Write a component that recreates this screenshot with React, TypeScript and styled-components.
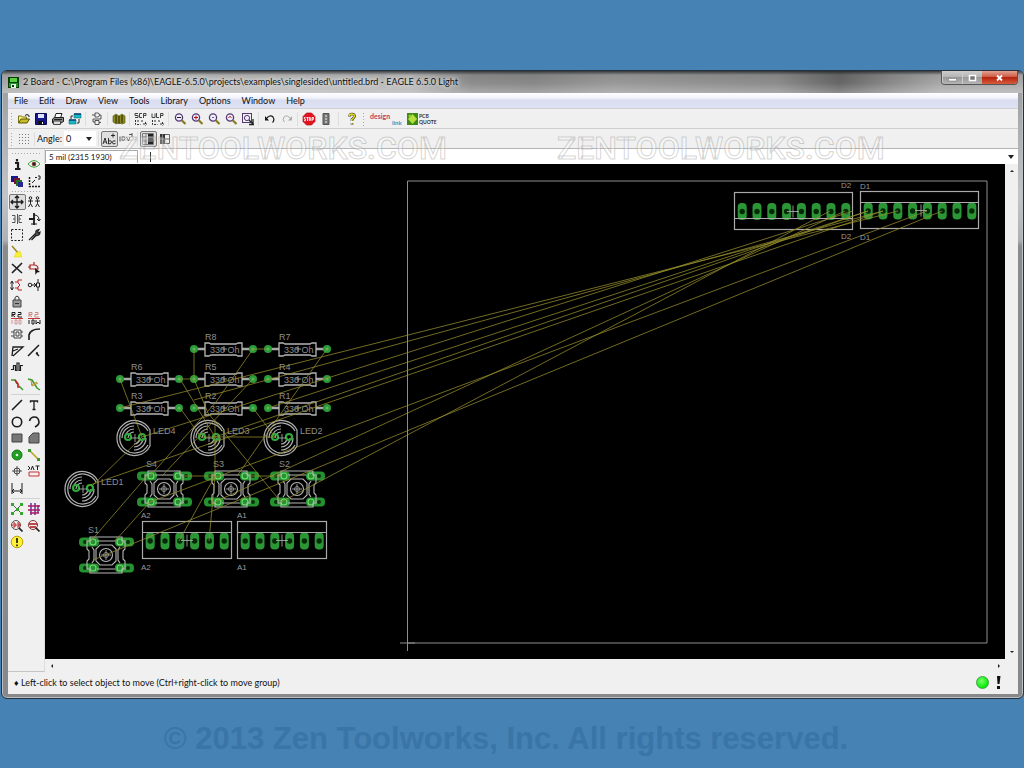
import React from 'react';
import styled, { createGlobalStyle } from 'styled-components';

const GlobalStyle = createGlobalStyle`
  * { box-sizing: border-box; }
  html, body { margin: 0; background: #4682b4; }
  body, button, select, input { font-family: Lato, "Open Sans", sans-serif; font-size: 9px; color: #111; }
  button { border: 0; padding: 0; background: none; }
`;

const Desktop = styled.div`
  display: flex;
  flex-direction: column;
  min-height: 100vh;
  padding-top: 70px;
  background: #4682b4;
`;

const Window = styled.main`
  display: flex;
  flex: 1;
  flex-direction: column;
  margin-left: 1px;
  padding: 0 5px 4px 6px;
  border: 1px solid #25313b;
  border-radius: 6px;
  background: linear-gradient(#9a9a9a, #c4c4c4 20%, #b0b0b0 27%, #8b8b8b 28%, #888 100%);
  box-shadow: inset 0 0 0 1px #b9c0c6;
`;

const TitleBar = styled.header`
  display: flex;
  align-items: center;
  height: 22px;
  margin: 0 -5px 0 -6px;
  padding: 0 5px 0 6px;
  border-radius: 5px 5px 0 0;
  background:
    linear-gradient(rgba(20, 25, 30, .75), rgba(60, 60, 60, .1) 4px, transparent 12px, rgba(255, 255, 255, .25)),
    linear-gradient(90deg, #a8a8a8, #bcbcbc 10%, #b4b4b4 40%, #8d8d8d 46%, #888 52%, #999 60%, #8c8c8c 76%, #666 82%, #8a8a8a 87%, #a9a9a9 92%, #aaa);
`;

const Title = styled.h1`
  flex: 1;
  margin: 0;
  padding-left: 4px;
  font-size: 9px;
  font-weight: 400;
  line-height: 18px;
  white-space: nowrap;
  text-shadow: 0 0 4px #fff, 0 0 6px #ddd;
`;

const Controls = styled.div`
  display: flex;
  align-self: flex-start;
  border: 1px solid #555;
  border-top: 0;
  border-radius: 0 0 4px 4px;
  overflow: hidden;
`;

const ControlButton = styled.button<{ $close?: boolean }>`
  display: flex;
  align-items: center;
  justify-content: center;
  width: ${p => (p.$close ? 35 : 20)}px;
  height: 13px;
  border-left: ${p => (p.$close ? 0 : 1)}px solid #ccc;
  background: ${p => (p.$close
    ? 'linear-gradient(#e2a192, #cf5b45 45%, #b5250f 50%, #d85b3c)'
    : 'linear-gradient(#cdcdcd, #b5b5b5 45%, #999 50%, #b5b5b5)')};
`;

const Client = styled.div`
  position: relative;
  display: flex;
  flex: 1;
  flex-direction: column;
  background: #f0f0f0;
`;

const MenuBar = styled.nav`
  display: flex;
  align-items: center;
  gap: 11px;
  height: 16px;
  padding-left: 6px;
  border-bottom: 1px solid #d0d0d4;
  background: linear-gradient(#fff, #f3f4fb 30%, #dadcf0 50%, #dfe2f4);
`;

const MenuItem = styled.button`
  line-height: 12px;
`;

const Toolbar = styled.div`
  display: flex;
  align-items: center;
  height: 20px;
  border-bottom: 1px solid #cfcfcf;
`;

const ParameterBar = styled(Toolbar)`
  border-bottom-color: #b4b4b4;
`;

const Grip = styled.span`
  width: 3px;
  height: 14px;
  margin: 0 2px;
  background: radial-gradient(circle, #aaa 0 1px, transparent 1px) 0 0 / 3px 3px;
`;

const Divider = styled.span<{ $space?: number }>`
  width: 1px;
  height: 14px;
  margin: 0 ${p => p.$space ?? 2}px;
  background: #dedede;
`;

const ToolButton = styled.button<{ $active?: boolean; $wide?: boolean }>`
  display: flex;
  align-items: center;
  justify-content: center;
  width: ${p => (p.$wide ? 'auto' : '17px')};
  height: 16px;
  border: 1px solid ${p => (p.$active ? '#777' : 'transparent')};
  border-radius: 2px;
  background: ${p => (p.$active ? '#dedede' : 'transparent')};
  svg { flex: none; overflow: visible; }
`;

const AngleLabel = styled.label`
  display: flex;
  align-items: center;
  gap: 2px;
`;

const AngleBox = styled.span`
  display: flex;
  align-items: center;
  width: 32px;
  height: 15px;
  padding-right: 4px;
  background: #fff;
`;

const AngleSelect = styled.select`
  flex: 1;
  min-width: 0;
  padding: 0 2px;
  border: 0;
  background: none;
  appearance: none;
`;

const Watermark = styled.div`
  position: absolute;
  top: 36px;
  left: 111px;
  right: 0;
  display: flex;
  gap: 110px;
  overflow: hidden;
  font: 500 32px/38px Roboto, sans-serif;
  color: rgba(255, 255, 255, .3);
  -webkit-text-stroke: 1px rgba(140, 140, 140, .38);
  pointer-events: none;
`;

const Body = styled.div`
  display: flex;
  flex: 1;
`;

const Palette = styled.aside`
  display: flex;
  flex-direction: column;
  width: 37px;
  padding: 2px 1px 0 0;
  border-bottom: 1px solid #c4c4c4;
  border-right: 1px solid #ddd;
`;

const PaletteGroup = styled.div`
  display: grid;
  grid-template-columns: 17px 17px;
  grid-auto-rows: 17px 16px;
  justify-content: center;
`;

const PaletteRule = styled.span<{ $dots?: boolean }>`
  height: 3px;
  margin: 1px 3px;
  background: ${p => (p.$dots
    ? 'radial-gradient(circle, #aaa 0 1px, transparent 1px) 0 0 / 3px 3px'
    : 'linear-gradient(transparent 1px, #d2d2d2 1px 2px, transparent 2px)')};
`;

const Work = styled.section`
  display: flex;
  flex: 1;
  flex-direction: column;
  min-width: 0;
`;

const CommandRow = styled.div`
  display: flex;
  align-items: center;
  height: 15px;
  background: #fff;
`;

const Coordinates = styled.output`
  width: 93px;
  height: 13px;
  padding-left: 3px;
  border: 1px solid #aaa;
  border-width: 1px 1px 0 1px;
  font-size: 8px;
  line-height: 13px;
`;

const CommandInput = styled.input`
  flex: 1;
  min-width: 0;
  height: 10px;
  margin-left: 12px;
  padding: 0 4px;
  border: 0;
  border-left: 1px solid #333;
  outline: 0;
  background: none;
`;

const DropButton = styled.button`
  width: 14px;
  line-height: 0;
`;

const CanvasRow = styled.div`
  display: flex;
  flex: 1;
`;

const Board = styled.div`
  display: flex;
  flex: 1;
  min-width: 0;
  background: #000;
  svg { flex: 1; min-width: 0; width: 100%; }
`;

const VerticalScroll = styled.div`
  display: flex;
  flex-direction: column;
  align-items: center;
  justify-content: space-between;
  width: 13px;
  padding: 4px 0;
`;

const HorizontalScroll = styled.div`
  display: flex;
  align-items: center;
  justify-content: space-between;
  height: 13px;
  padding: 0 16px 0 4px;
`;

const ScrollArrow = styled.button`
  display: flex;
`;

const StatusBar = styled.footer`
  display: flex;
  align-items: center;
  gap: 7px;
  height: 22px;
  padding: 0 17px 2px 6px;
`;

const StatusText = styled.span`
  flex: 1;
  white-space: nowrap;
`;

const Lamp = styled.span`
  width: 13px;
  height: 13px;
  border: 1px solid #3aa53a;
  border-radius: 50%;
  background: radial-gradient(circle at 40% 35%, #7dff6a, #12f012 60%, #08c808);
`;

const Copyright = styled.p`
  display: flex;
  align-items: center;
  justify-content: center;
  height: 70px;
  margin: 0;
  padding: 10px 12px 0 0;
  font: bold 31px/36px "Liberation Sans", sans-serif;
  color: #3b75a7;
  white-space: nowrap;
`;

const Icon = ({ children, w = 14 }: { children: React.ReactNode; w?: number }) => (
  <svg width={w} height={14} viewBox={`0 0 ${w} 14`} fill="none" stroke="#1c1c1c" aria-hidden="true">{children}</svg>
);

const lens = <><circle cx="6" cy="5.500" r="3.600" fill="#eef" stroke="#553a72" strokeWidth="1.300" /><path d="M8.700 8.300L12.500 12" stroke="#8a7a22" strokeWidth="2.200" /></>;

const icons: Record<string, React.ReactNode> = {
  open: <><path d="M1.500 11V4h3l1 1h4v2" fill="#f5ef83" stroke="#7c7410" /><path d="M1.500 11l2.500-4h8.500L10 11z" fill="#c9bd24" stroke="#5a5408" /><path d="M8 3.500q2-2 4 0v1.500" /></>,
  save: <><path d="M1.500 1.500h11v11h-11z" fill="#17178c" stroke="#0a0a50" /><path d="M4 2h6v4H4z" fill="#dfe2fa" stroke="none" /><path d="M4 9h6v3.500H4z" fill="#111" stroke="none" /><path d="M8 10h1v2H8z" fill="#fff" stroke="none" /></>,
  print: <><path d="M3.500 6L5 1.500h6L9.500 6" fill="#fff" /><path d="M1.500 7l2-1.500h9v4L10 11H1.500z" fill="#888" /><path d="M2.500 9h7v3.500h-7z" fill="#ddd" stroke="#444" /><path d="M3 7.500h8" stroke="#222" /></>,
  switch: <><path d="M6 2h7v4H6zM1 8h7v4H1z" fill="#18b9c6" stroke="#087280" strokeWidth=".6" /><path d="M5 4H3v3M9 11h2V7" stroke="#222" /><path d="M6 2h7M1 8h7" stroke="#123e78" strokeWidth="1.500" /></>,
  board: <><path d="M5 1h2.500a2 2 0 010 4H5zM5 8.500h4v4H5zM2 3h3M9.500 3H11v4H3v3h2M9 10.500h2" stroke="#555" /></>,
  library: <><path d="M1 4l3-2 3 2 3-2 3 2v7l-3 1-3-1-3 1-3-2z" fill="#8a8a20" stroke="#55550c" strokeWidth=".6" /><path d="M4 3v8M7 4v8M10 3v8" stroke="#262606" /></>,
  script: <><path d="M4 1.500H1v2h3v2H1M8 1.500H5.500v4H8M9.500 6V1.500H12v2H9.500" stroke="#444" /><path d="M1.500 8v4.500h5M4 8v2M8 8v2M9 12h4M11.500 10v3.500" stroke="#333" strokeDasharray="2 1" /></>,
  ulp: <><path d="M1 1.500v4h3v-4M5.500 1v4.500H8M9.500 6V1.500H12v2H9.500" stroke="#444" /><path d="M1.500 8v4.500h5M4 8v2M8 8v2M9 12h4M11.500 10v3.500" stroke="#333" strokeDasharray="2 1" /></>,
  zoomFit: <>{lens}<path d="M4 5.500h4" stroke="#222" /></>,
  zoomIn: <>{lens}<path d="M4 5.500h4M6 3.500v4" stroke="#b11" /></>,
  zoomOut: <>{lens}<path d="M5 5.500h2" stroke="#666" /></>,
  zoomRedraw: <>{lens}<path d="M4.500 6q1-3 3-.5" stroke="#b11" /></>,
  zoomSelect: <><rect x="1.500" y="1.500" width="9" height="9" stroke="#553a72" /><circle cx="6" cy="6" r="2.600" fill="#eef" stroke="#553a72" /><path d="M8 8l4 4M8 12.500h5M12 7v5" stroke="#222" strokeWidth="1.300" /></>,
  undo: <><path d="M3 7q4-5 7-2 2 3-.5 5.500" strokeWidth="1.200" /><path d="M2 4v4.500h4z" fill="#111" stroke="none" /></>,
  redo: <g stroke="#aaa"><path d="M11 7Q7 2 4 5 2 8 4.500 10" /><path d="M12 4v4.500H8z" fill="#aaa" stroke="none" /></g>,
  stop: <><path d="M4.500 1h5L13 4.500v5L9.500 13h-5L1 9.500v-5z" fill="#e01420" stroke="#b70d18" strokeWidth=".7" /><path d="M3.500 5.500H2.300v1.500h1.200v1.700H2M4.500 5.500h2M5.500 5.500v3.500M7.300 5.500h1v3h-1zM10 9V5.500h1.500V7.300H10" stroke="#fff" strokeWidth=".9" /></>,
  go: <><path d="M4 1.500h6v11H4z" fill="#777" stroke="#555" /><path d="M6 4h2M6 7h2M6 10h2" stroke="#ccc" strokeWidth="1.600" /></>,
  help: <><path d="M4.500 4.500q0-2.500 2.500-2.500t2.500 2.300q0 1.500-2.500 3V9M7 11v1.500" stroke="#222" strokeWidth="2.600" /><path d="M4.300 4.300q0-2.300 2.600-2.300t2.400 2.300q0 1.500-2.500 3V9M6.800 11v1.300" stroke="#f3e615" strokeWidth="1.500" /></>,
  grid: <path d="M2 2.500h10M2 5.500h10M2 8.500h10M2 11.500h10" stroke="#777" strokeDasharray="1 2" />,
  abc: <><path d="M1 12l2-6 2 6M2 10h2M6.500 6v6M6.500 9q3-1 3 1t-3 2M13.500 9q-3-1-3 1.500t3 1M9 3.500h4M11 1.500v4" strokeWidth=".9" /></>,
  flip: <><path d="M1 4.500v5M3 8.500V5q3-1 3 1.500T3 8M7.500 5l2 4 1.500-4M10 2.500h3M13 1v4" stroke="#555" /></>,
  padLeft: <><path d="M1.500 1.500h11v11h-11zM5 2v10M2 5h3M2 9h3" stroke="#666" strokeWidth=".8" /><path d="M7 2h5v10H7z" fill="#222" stroke="none" /><path d="M7 5h5M7 9h5" stroke="#bbb" strokeWidth=".8" /></>,
  padRight: <><path d="M2 2h5v10H2z" fill="#333" stroke="none" /><path d="M2 7h5M4.500 2v10" stroke="#999" strokeWidth=".7" /><path d="M7 2.500h4.500v9H7M7 7h5" stroke="#666" /></>,
  info: <path d="M5 6h3v6M5 12h5.500M7 2v2.500" strokeWidth="2.200" />,
  show: <><path d="M1 7q6-7 12 0-6 6.500-12 0z" fill="#fff" stroke="#3aa53a" /><circle cx="7" cy="7" r="2" fill="#222" stroke="#c33" strokeWidth=".6" /></>,
  display: <><path d="M1 2h7v6H1z" fill="#18188c" stroke="none" /><path d="M4 4h6v6H4z" fill="#7a1430" stroke="none" /><path d="M6 6h6v6H6z" fill="#226e28" stroke="none" /><path d="M8 8h5v5H8z" fill="#26268c" stroke="none" /></>,
  mark: <><path d="M2.500 3v9.500H13" strokeDasharray="2 1" strokeWidth="1.500" /><path d="M5 9l3-3M8 3.500h2M11 2h2v3h-2" /></>,
  move: <path d="M7 1v12M1 7h12M5 3l2-2 2 2M5 11l2 2 2-2M3 5L1 7l2 2M11 5l2 2-2 2" strokeWidth="1.300" />,
  copy: <g><circle cx="3.500" cy="3" r="1.300" /><circle cx="10.500" cy="3" r="1.300" /><path d="M3.500 4.500v4M1 6h5M1.500 12l2-3.500 2 3.500M10.500 4.500v4M8 6h5M8.500 12l2-3.500 2 3.500" /></g>,
  mirror: <path d="M2 3.500h3v7H2M3 7h2M12 3.500H9v7h3M11 7H9M7.500 2v10" stroke="#444" strokeWidth=".9" />,
  rotate: <><path d="M7 1v12M2 7h6" strokeWidth="1.800" /><path d="M7 3q5 0 5 5M10 7l2 2 1.500-2M4 12h6" /></>,
  group: <path d="M1.500 1.500h11v11h-11z" strokeDasharray="2 1.500" />,
  change: <path d="M2 12l7-7M9 5q-1-3 3-3.500L10.500 4l1 1L13 4q0 4-4 3.500L4.500 12" fill="#555" strokeWidth="1.200" />,
  paste: <><path d="M2 1l6 7" stroke="#998a20" strokeWidth="1.600" /><path d="M6 8l4-2 2 6H4z" fill="#f7f033" stroke="#e1d72a" strokeWidth=".6" /></>,
  del: <path d="M2 3l10 9M12 2L2 12" strokeWidth="1.600" />,
  add: <><path d="M3 4h4q4 0 4 4H3zM1 6h2M7 1v3" stroke="#a22" strokeWidth="1.200" /><path d="M8 7l5 4-3 .5L8.500 14z" fill="#111" stroke="none" /></>,
  pinswap: <><path d="M2 4v7M.5 5.500L2 3l1.500 2.500M.5 9.500L2 12l1.500-2.500" /><path d="M12 2H8v3l2 2-2 2v3h4M5 4h3M5 10h3" stroke="#b22" /></>,
  replace: <><circle cx="3" cy="7" r="1.800" /><path d="M5 7h3M7 5l2 2-2 2M11 1v4M11 9v4M9.500 5h3v4h-3z" /></>,
  lock: <><path d="M3 6h8v7H3z" fill="#999" stroke="#444" /><path d="M5 6V3.500q2-3 4 0V6M5 9.500h4" stroke="#333" /></>,
  name: <><path d="M2 6V1.500h3v2H2l3 2.500M8 1.500h3v2H8V6h4" /><path d="M1 7.500h12" stroke="#c33" /><path d="M2 9v4M5 9h2v4H5zM9 9h2v4H9z" stroke="#c99" /></>,
  value: <><path d="M2 6V1.500h3v2H2l3 2.500M8 1.500h3v2H8V6h4" stroke="#c88" /><path d="M1 7.500h12" stroke="#c33" /><path d="M2 9v4M5 9h2v4H5zM9 9v4l2-2 2 2V9" /></>,
  smash: <path d="M4 3h7v8H4zM1 5h3M11 5h2M1 9h3M11 9h2M6 5h3v4H6z" stroke="#444" />,
  miter: <><path d="M2 13V8q1-6 11-6" strokeWidth="1.600" /><path d="M2 8L8 2" strokeDasharray="1 1" /></>,
  split: <path d="M2 12L3 3h10L3 12M3 7l5-2" strokeWidth="1.300" />,
  optimize: <path d="M1 12L12 1M9 9l3 3M9 9h2" strokeWidth="1.500" />,
  meander: <path d="M1 9.500h2.500v-4h2v5H7V3h2v7.500h1.500v-5H13" strokeWidth="1.200" />,
  route: <><path d="M1 3h4l2 4" stroke="#3a9a2d" strokeWidth="1.500" /><path d="M5 3l3 4v3h2" stroke="#c82020" strokeWidth="1.700" /><path d="M9 9l4 4" stroke="#3a9a2d" strokeWidth="1.500" /></>,
  ripup: <><path d="M1 2l4 1 5 8 3 2" stroke="#3a9a2d" strokeWidth="1.500" /><path d="M4 8l6-3M4 3l1 6 6-3" stroke="#b39524" /></>,
  wire: <path d="M2 12L12 2" strokeWidth="1.600" />,
  text: <path d="M3.500 4.500V3h7v1.500M7 3v8.500M5.500 11.500h3" strokeWidth="1.300" />,
  circle: <circle cx="7" cy="7" r="4.700" strokeWidth="1.600" />,
  arc: <path d="M2.500 6q1-4 5-4t4.500 5q0 3-4 5" strokeWidth="1.600" />,
  rect: <path d="M2 3h10v8H2z" fill="#777" stroke="#444" />,
  polygon: <path d="M2 12V6l4-4h6v10z" fill="#777" stroke="#444" />,
  via: <><circle cx="7" cy="7" r="5" fill="#20a020" stroke="#137313" /><circle cx="7" cy="7" r="1.300" fill="#eee" stroke="none" /></>,
  signal: <><path d="M2 2l10 10" stroke="#b7a51c" strokeWidth="1.600" /><path d="M1 1h3v3H1zM10 10h3v3h-3z" fill="#3a9a2d" stroke="none" /></>,
  hole: <><circle cx="7" cy="7" r="3" stroke="#444" /><path d="M7 2v10M2 7h10" strokeWidth=".7" /></>,
  attribute: <><path d="M1 2l2 2-2 2M4 6l1.500-4L7 6M8.500 2h4M10.500 2v4" /><path d="M2 8h10v4H2z" stroke="#c33" /></>,
  dimension: <path d="M2 2v11M12 2v11M2 10h10M4 8l-2 2 2 2M10 8l2 2-2 2" />,
  ratsnest: <><path d="M2 2l10 10M12 2L2 12" stroke="#555" /><path d="M1 1h3v3H1zM10 1h3v3h-3zM1 10h3v3H1zM10 10h3v3h-3zM6 6h3v3H6z" fill="#35a52b" stroke="none" /></>,
  auto: <><path d="M4 1v12M8 1v12M11 3v8" stroke="#402090" strokeWidth="1.300" /><path d="M1 4h12M1 8h12M3 11h9" stroke="#b01860" strokeWidth="1.300" /></>,
  erc: <><circle cx="6" cy="6" r="4.500" stroke="#555" /><path d="M3 4h2v4H3M7 4h2v4H7M1 6h10" stroke="#b22" /><path d="M9 9l3.500 3.500" strokeWidth="1.700" /></>,
  drc: <><circle cx="6" cy="6" r="4.500" stroke="#833" /><path d="M2 5h8M3 8h6" stroke="#a11" strokeWidth="1.600" /><path d="M9 9l3.500 3.500" strokeWidth="1.700" /></>,
  errors: <><circle cx="7" cy="7" r="5.800" fill="#fff238" stroke="#b8a50b" /><path d="M7 3v5M7 9.500v1.700" strokeWidth="1.700" /></>,
};

const Tool = ({ name, active }: { name: string; active?: boolean }) => (
  <ToolButton $active={active} aria-label={name} aria-pressed={active}><Icon>{icons[name]}</Icon></ToolButton>
);

const Arrow = ({ d }: { d: string }) => <svg width="6" height="6" viewBox="0 0 6 6" aria-hidden="true"><path d={d} fill="#222" /></svg>;

const actions = [
  ['open', 'save', 'print', 'switch'], ['board'], ['library'], ['script', 'ulp'],
  ['zoomFit', 'zoomIn', 'zoomOut', 'zoomRedraw', 'zoomSelect'],
];

const paletteGroups: string[][] = [
  ['info', 'show', 'display', 'mark'],
  ['move', 'copy', 'mirror', 'rotate', 'group', 'change', 'paste', '', 'del', 'add', 'pinswap', 'replace',
    'lock', '', 'name', 'value', 'smash', 'miter', 'split', 'optimize', 'meander', '', 'route', 'ripup'],
  ['wire', 'text', 'circle', 'arc', 'rect', 'polygon', 'via', 'signal', 'hole', 'attribute', 'dimension', ''],
  ['ratsnest', 'auto', 'erc', 'drc', 'errors'],
];

const resistors: [string, number, number][] = [
  ['R8', 194, 349], ['R7', 268, 349], ['R6', 120, 379], ['R5', 194, 379],
  ['R4', 268, 379], ['R3', 120, 408], ['R2', 194, 408], ['R1', 268, 408],
];
const leds: [string, number, number][] = [['LED4', 134, 438], ['LED3', 208, 438], ['LED2', 281, 438], ['LED1', 82, 489]];
const switches: [string, number, number][] = [['S4', 164, 489], ['S3', 231, 489], ['S2', 297, 489], ['S1', 106, 555]];

const airwires: [number, number, number, number][] = [
  [120, 408, 898, 211], [194, 400, 883, 211], [142, 437, 853, 211], [268, 408, 868, 211],
  [215, 437, 868, 211], [90, 485, 883, 211], [150, 502, 927, 211], [93, 560, 942, 211],
  [215, 502, 845, 211], [281, 502, 830, 211],
  [194, 349, 194, 378], [253, 349, 268, 349], [180, 379, 194, 379], [120, 379, 142, 437],
  [180, 379, 215, 437], [180, 408, 201, 437], [194, 379, 208, 413], [253, 349, 216, 402], [216, 402, 150, 476],
  [253, 379, 162, 476], [327, 349, 289, 402], [289, 402, 237, 476], [253, 408, 275, 437],
  [201, 437, 275, 437], [208, 413, 281, 502], [142, 437, 93, 485],
  [215, 420, 215, 476], [215, 476, 179, 541], [215, 476, 209, 541], [147, 476, 91, 541],
  [150, 502, 115, 541], [184, 476, 215, 476], [250, 476, 281, 476],
];

const Pad = ({ x, y }: { x: number; y: number }) => (
  <g><rect x={x - 4.5} y={y - 8.5} width="9" height="17" rx="4" fill="#2b9635" /><circle cx={x} cy={y} r="2.700" fill="#052a08" /></g>
);

const Cross = ({ x, y, r = 5 }: { x: number; y: number; r?: number }) => (
  <path d={`M${x - r} ${y}h${2 * r}M${x} ${y - r}v${2 * r}`} stroke="#b5b5b5" strokeWidth=".8" />
);

const Header = ({ x, y, w, n, bar, cross }: { x: number; y: number; w: number; n: number; bar: number; cross: number }) => (
  <g>
    {Array.from({ length: n }, (_, i) => <Pad key={i} x={x + 7.7 + i * 14.8} y={bar > 20 ? y + 19 : y + 19.5} />)}
    <rect x={x} y={y} width={w} height="37" fill="none" stroke="#aaa" strokeWidth="1.200" />
    <path d={`M${x} ${y + bar}h${w}`} stroke="#aaa" />
    <Cross x={cross} y={y + 19} r={6} />
  </g>
);

const Resistor = ({ x, y, name }: { x: number; y: number; name: string }) => (
  <g>
    <path d={`M${x} ${y}h11M${x + 48} ${y}h11`} stroke="#a5aaa5" strokeWidth="2.500" />
    <circle cx={x} cy={y} r="4" fill="#2b9a38" /><circle cx={x + 59} cy={y} r="4" fill="#2b9a38" />
    <circle cx={x} cy={y} r="1.500" fill="#53bd5d" /><circle cx={x + 59} cy={y} r="1.500" fill="#53bd5d" />
    <path d={`M${x + 11} ${y - 6}h4l2 1h25l2-1h4v13h-4l-2-1h-25l-2 1h-4z`} fill="none" stroke="#b5b5b5" strokeWidth="1.300" />
    <Cross x={x + 30} y={y} r={3} />
    <text x={x + 16} y={y + 4} fontSize="9" fill="#8e8e8e">330 Oh</text>
    <text x={x + 11} y={y - 9} fontSize="9" fill="#8e8e8e">{name}</text>
  </g>
);

const Led = ({ x, y, name }: { x: number; y: number; name: string }) => (
  <g fill="none" stroke="#b0b0b0" strokeWidth="1.200">
    <path d={`M${x + 16} ${y - 8}A17.500 17.500 0 1 0 ${x + 16} ${y + 8}zM${x + 14} ${y - 7}A15 15 0 1 0 ${x + 14} ${y + 7}`} />
    <path d={`M${x - 12} ${y}a12 12 0 0 1 12-12M${x - 9} ${y}a9 9 0 0 1 9-9M${x - 6} ${y}a6 6 0 0 1 6-6M${x + 12} ${y}a12 12 0 0 1-12 12M${x + 9} ${y}a9 9 0 0 1-9 9M${x + 6} ${y}a6 6 0 0 1-6 6`} />
    <circle cx={x - 6} cy={y - 1} r="3" stroke="#2faa3c" strokeWidth="2.200" />
    <circle cx={x + 8} cy={y - 1} r="3" stroke="#2faa3c" strokeWidth="2.200" />
    <Cross x={x + 1} y={y} r={4} />
    <text x={x + 19} y={y - 4} fontSize="9" fill="#8e8e8e" stroke="none">{name}</text>
  </g>
);

const PushSwitch = ({ x, y, name }: { x: number; y: number; name: string }) => (
  <g fill="none" stroke="#b5b5b5" strokeWidth="1.100">
    {[-13, 13].map(dy => (
      <g key={dy} stroke="none">
        <rect x={x - 27} y={y + dy - 4.5} width="20" height="9" rx="4" fill="#259130" />
        <rect x={x + 9} y={y + dy - 4.5} width="19" height="9" rx="4" fill="#259130" />
        <circle cx={x - 21} cy={y + dy} r="2" fill="#06330a" /><circle cx={x + 22} cy={y + dy} r="2" fill="#06330a" />
        <circle cx={x - 13} cy={y + dy} r="3" fill="none" stroke="#74dc72" /><circle cx={x + 14} cy={y + dy} r="3" fill="none" stroke="#74dc72" />
      </g>
    ))}
    <path d={`M${x - 16} ${y - 18}h32v4h3v8l-2 2v8l2 2v8h-3v4h-32v-4h-3v-8l2-2v-8l-2-2v-8h3z`} />
    <path d={`M${x - 9} ${y - 14}h18M${x - 9} ${y + 14}h18M${x - 14} ${y - 8}l2 3v10l-2 3M${x + 14} ${y - 8}l-2 3v10l2 3`} />
    <path d={`M${x - 6} ${y - 10}h12l4 4v12l-4 4h-12l-4-4v-12z`} />
    <circle cx={x} cy={y} r="6.500" />
    <circle cx={x} cy={y} r="2.500" strokeWidth=".7" />
    <Cross x={x} y={y} r={5} />
    <text x={x - 18} y={y - 22} fontSize="9" fill="#8e8e8e" stroke="none">{name}</text>
  </g>
);

const Layout = () => (
  <svg viewBox="45 164 960 495" preserveAspectRatio="xMidYMid meet" fontFamily="'Liberation Sans', sans-serif" role="img" aria-label="Board layout">
    <path d="M407.500 181h579.500v462h-579.500zM400 643h15M407.500 636v15" fill="none" stroke="#8e8e8e" />
    <Header x={734.5} y={192.5} w={118} n={8} bar={26} cross={793} />
    <Header x={860.5} y={191.5} w={118} n={8} bar={11} cross={921} />
    <Header x={142.5} y={521.500} w={89} n={6} bar={11} cross={187} />
    <Header x={237.5} y={521.500} w={89} n={6} bar={11} cross={282} />
    {resistors.map(([name, x, y]) => <Resistor key={name} name={name} x={x} y={y} />)}
    {leds.map(([name, x, y]) => <Led key={name} name={name} x={x} y={y} />)}
    {switches.map(([name, x, y]) => <PushSwitch key={name} name={name} x={x} y={y} />)}
    <g stroke="#978f2c" strokeWidth=".75">
      {airwires.map(([x1, y1, x2, y2], i) => <line key={i} x1={x1} y1={y1} x2={x2} y2={y2} />)}
    </g>
    <g fontSize="8" fill="#999">
      <text x="841" y="188">D2</text><text x="860" y="189">D1</text>
      <text x="841" y="239">D2</text><text x="860" y="240">D1</text>
      <text x="141" y="518">A2</text><text x="237" y="518">A1</text>
      <text x="141" y="570">A2</text><text x="237" y="570">A1</text>
    </g>
  </svg>
);

export default function App() {
  return (
    <Desktop>
      <GlobalStyle />
      <Window>
        <TitleBar>
          <svg width="11" height="11" viewBox="0 0 11 11" aria-hidden="true"><path d="M0 0h11v11H0z" fill="#0b3d0b" /><path d="M2 1h7v4H2z" fill="#58d03e" /><path d="M1 6h9v4H1z" fill="#24902a" /><path d="M3 7h5v4H3z" fill="#e1f5d8" /><path d="M4 8h2v2H4z" fill="#123" /></svg>
          <Title>2 Board - C:\Program Files (x86)\EAGLE-6.5.0\projects\examples\singlesided\untitled.brd - EAGLE 6.5.0 Light</Title>
          <Controls>
            <ControlButton aria-label="Minimize"><svg width="9" height="8"><path d="M.5 4.500h8v2.500h-8z" fill="#fff" stroke="#666" strokeWidth=".5" /></svg></ControlButton>
            <ControlButton aria-label="Maximize"><svg width="9" height="8"><path d="M1.500 1.500h6v5h-6z" fill="#777" stroke="#fff" strokeWidth="1.500" /></svg></ControlButton>
            <ControlButton $close aria-label="Close"><svg width="9" height="8"><path d="M2 1.500l5 5M7 1.500l-5 5" stroke="#fff" strokeWidth="1.800" /></svg></ControlButton>
          </Controls>
        </TitleBar>
        <Client>
          <MenuBar>
            {['File', 'Edit', 'Draw', 'View', 'Tools', 'Library', 'Options', 'Window', 'Help'].map(m => <MenuItem key={m}>{m}</MenuItem>)}
          </MenuBar>
          <Toolbar>
            <Grip />
            {actions.map((group, i) => (
              <React.Fragment key={i}>
                {i > 0 && <Divider />}
                {group.map(name => <Tool key={name} name={name} />)}
              </React.Fragment>
            ))}
            <Divider />
            <Tool name="undo" /><Tool name="redo" />
            <Divider />
            <Tool name="stop" /><Tool name="go" />
            <Divider $space={4} />
            <Tool name="help" />
            <Grip />
            <ToolButton $wide aria-label="design link">
              <svg width="36" height="14" viewBox="0 0 36 14" fontFamily="Lato, sans-serif" fontWeight="700">
                <text x="2" y="7" fontSize="7" fill="#c2405c">design</text><text x="24" y="13" fontSize="6" fill="#3f8fb4">link</text>
              </svg>
            </ToolButton>
            <ToolButton $wide aria-label="PCB quote">
              <svg width="30" height="14" viewBox="0 0 30 14" fontFamily="Lato, sans-serif" fontWeight="700">
                <path d="M1 1h11v12H1z" fill="#3f8a16" /><path d="M6.500 2l4.500 5-4.500 5L2 7z" fill="#b6df3c" /><circle cx="4" cy="4" r="1.500" fill="#8fd02e" />
                <text x="13" y="6" fontSize="5" fill="#333">PCB</text><text x="13" y="12" fontSize="5" fill="#333">QUOTE</text>
              </svg>
            </ToolButton>
          </Toolbar>
          <ParameterBar>
            <Grip />
            <Tool name="grid" />
            <Divider />
            <AngleLabel>
              Angle:
              <AngleBox>
                <AngleSelect defaultValue="0"><option>0</option><option>45</option><option>90</option></AngleSelect>
                <Arrow d="M0 1h6L3 5z" />
              </AngleBox>
            </AngleLabel>
            <Divider />
            <Tool name="abc" active /><Tool name="flip" />
            <Divider />
            <Tool name="padLeft" active /><Tool name="padRight" />
          </ParameterBar>
          <Body>
            <Palette>
              <PaletteRule $dots />
              {paletteGroups.map((group, i) => (
                <React.Fragment key={i}>
                  {i > 0 && <PaletteRule $dots={i === 1} />}
                  <PaletteGroup>
                    {group.map((name, j) => (name ? <Tool key={j} name={name} active={name === 'move'} /> : <span key={j} />))}
                  </PaletteGroup>
                </React.Fragment>
              ))}
            </Palette>
            <Work>
              <CommandRow>
                <Coordinates>5 mil (2315 1930)</Coordinates>
                <CommandInput aria-label="Command line" />
                <DropButton aria-label="Command history"><Arrow d="M0 1h6L3 5z" /></DropButton>
              </CommandRow>
              <CanvasRow>
                <Board><Layout /></Board>
                <VerticalScroll>
                  <ScrollArrow aria-label="Scroll up"><Arrow d="M1 4h4L3 2z" /></ScrollArrow>
                  <ScrollArrow aria-label="Scroll down"><Arrow d="M1 2h4L3 4z" /></ScrollArrow>
                </VerticalScroll>
              </CanvasRow>
              <HorizontalScroll>
                <ScrollArrow aria-label="Scroll left"><Arrow d="M4 1v4L2 3z" /></ScrollArrow>
                <ScrollArrow aria-label="Scroll right"><Arrow d="M2 1v4l2-2z" /></ScrollArrow>
              </HorizontalScroll>
            </Work>
          </Body>
          <StatusBar>
            <StatusText>♦ Left-click to select object to move (Ctrl+right-click to move group)</StatusText>
            <Lamp />
            <svg width="5" height="13" viewBox="0 0 5 13" aria-hidden="true"><path d="M1 0h3.500L3.500 8h-2zM1 10h3v3H1z" fill="#111" /></svg>
          </StatusBar>
          <Watermark aria-hidden="true"><span>ZENTOOLWORKS.COM</span><span>ZENTOOLWORKS.COM</span></Watermark>
        </Client>
      </Window>
      <Copyright>© 2013 Zen Toolworks, Inc. All rights reserved.</Copyright>
    </Desktop>
  );
}
